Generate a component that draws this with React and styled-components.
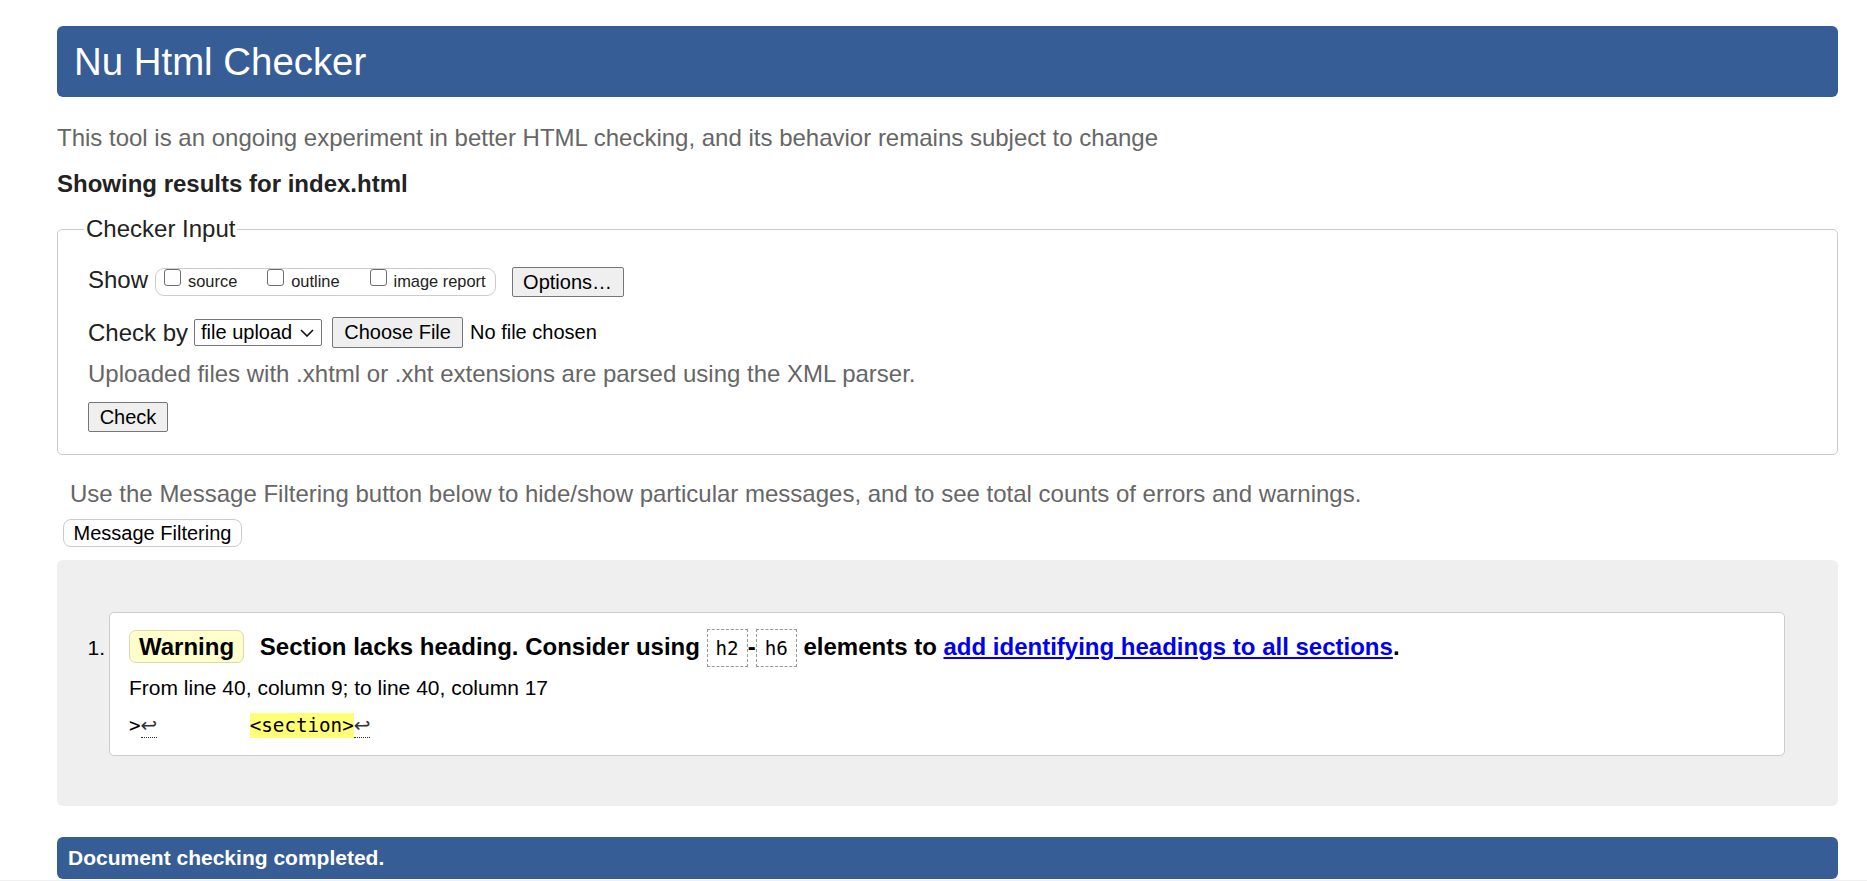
import React from "react";
import styled, { createGlobalStyle } from "styled-components";

const GlobalStyle = createGlobalStyle`
  html, body {
    margin: 0;
    padding: 0;
    background: #fff;
  }
  body {
    font-family: "Liberation Sans", Arial, sans-serif;
    color: #222;
  }
`;

const sans = `"Liberation Sans", Arial, sans-serif`;
const mono = `"DejaVu Sans Mono", "Liberation Mono", monospace`;

export default function App() {
  return (
    <>
      <GlobalStyle />
      <Page>
        <Header>
          <Title>Nu Html Checker</Title>
        </Header>
        <Intro>
          This tool is an ongoing experiment in better HTML checking, and its
          behavior remains subject to change
        </Intro>
        <Results>Showing results for index.html</Results>

        <Fieldset>
          <Legend>Checker Input</Legend>
          <ShowRow>
            <RowLabel>Show</RowLabel>
            <OptionGroup>
              <Option>
                <Check type="checkbox" />
                <OptionText>source</OptionText>
              </Option>
              <Option>
                <Check type="checkbox" />
                <OptionText>outline</OptionText>
              </Option>
              <Option>
                <Check type="checkbox" />
                <OptionText>image report</OptionText>
              </Option>
            </OptionGroup>
            <Button $w={112} $ml={16}>
              Options…
            </Button>
          </ShowRow>
          <CheckByRow>
            <RowLabel>Check by</RowLabel>
            <SelectBox>
              <span>file upload</span>
              <svg width="14" height="8" viewBox="0 0 14 8">
                <polyline
                  points="1,1 7,7 13,1"
                  fill="none"
                  stroke="#111"
                  strokeWidth="1.6"
                />
              </svg>
            </SelectBox>
            <Button $w={131} $ml={10} $h={31}>
              Choose File
            </Button>
            <FileName>No file chosen</FileName>
          </CheckByRow>
          <Hint>
            Uploaded files with .xhtml or .xht extensions are parsed using the
            XML parser.
          </Hint>
          <Button $w={80}>Check</Button>
        </Fieldset>

        <FilterNote>
          Use the Message Filtering button below to hide/show particular
          messages, and to see total counts of errors and warnings.
        </FilterNote>
        <FilterButton>Message Filtering</FilterButton>

        <MessagesBox>
          <Item>
            <Num>1.</Num>
            <Card>
              <MessageLine>
                <Badge>Warning</Badge>{" "}
                <strong>
                  Section lacks heading. Consider using <Code>h2</Code>-
                  <Code>h6</Code> elements to{" "}
                  <Link href="#">add identifying headings to all sections</Link>.
                </strong>
              </MessageLine>
              <Location>From line 40, column 9; to line 40, column 17</Location>
              <Extract>
                {">"}
                <Ret>↩</Ret>
                {"        "}
                <Mark>{"<section>"}</Mark>
                <Ret>↩</Ret>
              </Extract>
            </Card>
          </Item>
        </MessagesBox>

        <DoneBar>Document checking completed.</DoneBar>
      </Page>
      <NextStrip />
    </>
  );
}

// styling
const Page = styled.div`
  padding: 26px 29px 0 57px;
  font-family: ${sans};
`;

const Header = styled.div`
  height: 71px;
  background: #365d95;
  border-radius: 6px;
  padding-left: 17px;
`;

const Title = styled.h1`
  margin: 0;
  font-size: 38.4px;
  line-height: 71px;
  font-weight: normal;
  color: #fff;
`;

const Intro = styled.p`
  margin: 27px 0 0;
  font-size: 24px;
  line-height: 28px;
  color: #666;
`;

const Results = styled.h2`
  margin: 18px 0 0;
  font-size: 24px;
  line-height: 28px;
  font-weight: bold;
  color: #222;
`;

const Fieldset = styled.fieldset`
  margin: 17px 0 0;
  padding: 0 30px 22px 30px;
  border: 1px solid #ccc;
  border-radius: 5px;
  min-width: 0;
`;

const Legend = styled.legend`
  padding: 0 2px;
  margin-left: -4px;
  font-size: 24px;
  line-height: 28px;
  color: #222;
`;

const ShowRow = styled.div`
  display: flex;
  align-items: flex-start;
  height: 30px;
  margin-top: 24px;
`;

const CheckByRow = styled.div`
  display: flex;
  align-items: center;
  height: 31px;
  margin-top: 20px;
`;

const RowLabel = styled.span`
  font-size: 24px;
  line-height: 26px;
  color: #222;
  margin-right: 6px;
`;

const OptionGroup = styled.div`
  display: flex;
  align-items: flex-start;
  height: 28px;
  box-sizing: border-box;
  margin: 1px 0 0 1px;
  padding: 0 9px 0 8px;
  border: 1px solid #ccc;
  border-radius: 9px;
  gap: 30px;
`;

const Option = styled.label`
  display: flex;
  align-items: flex-start;
  gap: 7px;
`;

const Check = styled.input`
  appearance: none;
  -webkit-appearance: none;
  flex: none;
  display: block;
  margin: 0;
  width: 17px;
  height: 17px;
  box-sizing: border-box;
  border: 1.5px solid #6f6f6f;
  border-radius: 3px;
  background: #fff;
`;

const OptionText = styled.span`
  font-size: 16.4px;
  line-height: 19px;
  margin-top: 3px;
  color: #222;
`;

const Button = styled.button`
  box-sizing: border-box;
  width: ${(p) => p.$w}px;
  height: ${(p) => p.$h || 30}px;
  margin: 0 0 0 ${(p) => p.$ml || 0}px;
  padding: 0;
  font-family: ${sans};
  font-size: 20px;
  color: #000;
  background: #efefef;
  border: 1px solid #767676;
  border-radius: 2px;
`;

const SelectBox = styled.span`
  display: flex;
  align-items: center;
  justify-content: space-between;
  box-sizing: border-box;
  width: 128px;
  height: 27px;
  padding: 0 7px 0 6px;
  font-size: 20px;
  color: #000;
  background: #fff;
  border: 1px solid #767676;
  border-radius: 2px;
`;

const FileName = styled.span`
  margin-left: 7px;
  font-size: 20px;
  color: #000;
`;

const Hint = styled.p`
  margin: 12px 0 14px;
  font-size: 24px;
  line-height: 28px;
  color: #666;
`;

const FilterNote = styled.p`
  margin: 25px 0 0;
  padding-left: 13px;
  font-size: 24px;
  line-height: 28px;
  color: #666;
`;

const FilterButton = styled.button`
  display: block;
  box-sizing: border-box;
  width: 179px;
  height: 28px;
  margin: 11px 0 0 6px;
  padding: 0;
  font-family: ${sans};
  font-size: 20px;
  color: #000;
  background: #fff;
  border: 1px solid #ccc;
  border-radius: 8px;
`;

const MessagesBox = styled.div`
  margin-top: 13px;
  padding: 52px 53px 50px 30px;
  background: #efefef;
  border-radius: 6px;
`;

const Item = styled.div`
  display: flex;
  align-items: baseline;
`;

const Num = styled.span`
  box-sizing: border-box;
  width: 22px;
  padding-right: 4px;
  text-align: right;
  font-size: 21px;
  color: #000;
`;

const Card = styled.div`
  flex: 1;
  padding: 18px 19px 17px;
  background: #fff;
  border: 1px solid #ccc;
  border-radius: 5px;
`;

const MessageLine = styled.p`
  margin: 0;
  font-size: 24px;
  line-height: 32px;
  color: #000;
  white-space: nowrap;
`;

const Badge = styled.strong`
  padding: 2px 9px;
  margin-right: 9px;
  background: #ffffcc;
  border: 1px solid #dcd9b0;
  border-radius: 7px;
`;

const Code = styled.code`
  padding: 7px 8px 6px;
  font-family: ${mono};
  font-size: 19.2px;
  line-height: 0;
  font-weight: normal;
  border: 1px dashed #999;
`;

const Link = styled.a`
  color: #0000ee;
  text-decoration: underline;
`;

const Location = styled.p`
  margin: 12px 0 0;
  font-size: 21px;
  line-height: 26px;
  color: #000;
`;

const Extract = styled.p`
  margin: 13px 0 0;
  font-family: ${mono};
  font-size: 19.2px;
  line-height: 24px;
  white-space: pre;
  color: #000;
`;

const Ret = styled.span`
  font-family: "DejaVu Sans", sans-serif;
  font-size: 20px;
  line-height: 0;
  color: #333;
  border-bottom: 1px dotted #333;
`;

const Mark = styled.span`
  padding: 1px 0;
  background: #ffff77;
`;

const DoneBar = styled.div`
  margin-top: 31px;
  height: 42px;
  padding-left: 11px;
  background: #365d95;
  border-radius: 6px;
  font-size: 21px;
  line-height: 42px;
  font-weight: bold;
  color: #fff;
`;

const NextStrip = styled.div`
  margin-top: 1px;
  height: 20px;
  background: #f0f0f0;
`;
